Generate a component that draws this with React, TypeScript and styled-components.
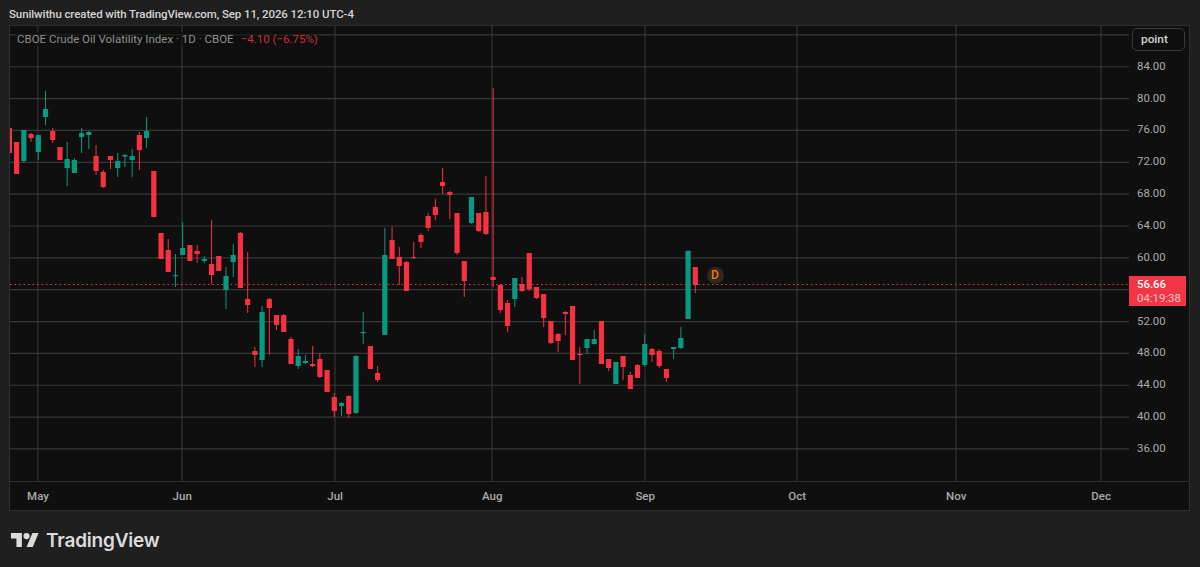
import React from "react";
import styled, { createGlobalStyle } from "styled-components";

const UP = "#089981";
const DOWN = "#f7313f";
const GRID = "#383838";

const GlobalStyle = createGlobalStyle`
    html, body {
        margin: 0;
        padding: 0;
        background: #1f1f1f;
    }
    body {
        font-family: Roboto, "Liberation Sans", sans-serif;
    }
`;

const Page = styled.div`
    width: 1200px;
    height: 567px;
    overflow: hidden;
    display: flex;
    flex-direction: column;
    background: #1f1f1f;
`;
const Caption = styled.div`
    height: 25px;
    padding: 3px 0 0 9px;
    box-sizing: border-box;
    display: flex;
    align-items: center;
    color: #d4d4d4;
    font-size: 11.5px;
    font-weight: 500;
    letter-spacing: -0.1px;
    white-space: nowrap;
`;
const Panel = styled.div`
    width: 1179px;
    height: 484px;
    margin-left: 9px;
    border: 1px solid #2e2e2e;
    background: #0f0f0f;
    display: grid;
    grid-template-columns: 1119px 60px;
    grid-template-rows: 455px 29px;
`;
const Plot = styled.div`
    position: relative;
    overflow: hidden;
`;
const Legend = styled.div`
    position: absolute;
    top: 6px;
    left: 6px;
    padding: 0 1px;
    display: flex;
    gap: 7px;
    background: rgba(15, 15, 15, 0.55);
    color: #8f8f8f;
    font-size: 11.5px;
    line-height: 14px;
    white-space: nowrap;
`;
const Change = styled.span`
    color: #c9303c;
`;
const PriceAxis = styled.div`
    position: relative;
    padding-top: 24.8px;
    display: flex;
    flex-direction: column;
`;
const PriceLabel = styled.div`
    height: 31.85px;
    line-height: 31.85px;
    padding-left: 8px;
    color: #ababab;
    font-size: 11.4px;
`;
const ScaleButton = styled.div`
    position: absolute;
    top: 2px;
    left: 3px;
    width: 53px;
    height: 23px;
    padding-left: 8px;
    box-sizing: border-box;
    border: 1px solid #3a3a3a;
    border-radius: 5px;
    background: #0f0f0f;
    color: #d4d4d4;
    font-size: 11.8px;
    font-weight: 500;
    line-height: 21px;
`;
const PriceTag = styled.div`
    position: absolute;
    top: 250px;
    left: 0;
    width: 57px;
    height: 30px;
    padding-left: 8px;
    box-sizing: border-box;
    background: #f23645;
    color: #ffffff;
    font-size: 11.4px;
    font-weight: 500;
    display: flex;
    flex-direction: column;
    justify-content: center;
`;
const TagLine = styled.span`
    height: 14px;
    line-height: 14px;
`;
const Countdown = styled(TagLine)`
    color: #fbc4c9;
    font-weight: 400;
`;
const TimeAxis = styled.div`
    height: 28px;
    padding-left: 28px;
    border-top: 1px solid #2e2e2e;
    display: flex;
    align-items: center;
    color: #ababab;
    font-size: 11.5px;
`;
const TimeCell = styled.div<{ $width: number }>`
    flex: 0 0 ${(p) => p.$width}px;
    width: ${(p) => p.$width}px;
`;
const TimeLabel = styled.span`
    display: inline-block;
    transform: translateX(-50%);
    font-weight: 500;
`;
const Corner = styled.div`
    border-top: 1px solid #2e2e2e;
`;
const Footer = styled.div`
    flex: 1;
    padding: 2px 0 0 11px;
    display: flex;
    align-items: center;
    gap: 7px;
`;
const Brand = styled.span`
    color: #dcdcdc;
    font-family: Inter, "Liberation Sans", sans-serif;
    font-size: 19px;
    font-weight: 600;
    letter-spacing: -0.2px;
`;
const DividendMark = styled.div`
    position: absolute;
    top: 240.5px;
    left: 696.5px;
    width: 17px;
    height: 17px;
    border-radius: 50%;
    background: #33281d;
    color: #ee7d0e;
    font-size: 12px;
    font-weight: 500;
    line-height: 17px;
    text-align: center;
`;

type Candle = [number, number, number, number, number];

// [direction, wick top, body top, body bottom, wick bottom], in page pixels. 1 = up
const candles: Candle[] = [
    [0, 128, 128, 153, 153], [0, 142, 142, 174, 174], [1, 130, 130, 161, 163], [0, 133, 134, 138, 142],
    [1, 135, 135, 152, 160], [1, 91, 109, 117, 125], [0, 128, 131, 140, 143], [0, 147, 147, 160, 160],
    [1, 142, 159, 168, 186], [1, 158, 160, 173, 173], [1, 128, 133, 137, 153], [1, 131, 132, 135, 149],
    [0, 145, 156, 171, 175], [0, 170, 172, 187, 188], [0, 156, 156, 160, 169], [1, 153, 161, 168, 177],
    [1, 154, 155, 156.5, 167], [1, 149, 156, 160, 177], [0, 132, 135, 150, 170], [1, 117, 131, 138, 148],
    [0, 171, 171, 217, 217], [0, 233, 233, 259, 259], [0, 239, 250, 272, 272], [1, 254, 275, 276.2, 287],
    [1, 222, 248, 255, 255], [0, 245, 245, 261, 261], [0, 245, 251, 254, 263], [1, 256, 259, 261, 263],
    [0, 220, 264, 275, 284], [0, 256, 256, 271, 271], [1, 267, 276, 290, 309], [1, 244, 255, 262, 277],
    [0, 232, 233, 288, 288], [0, 252, 299, 305, 313], [0, 347, 351, 355, 367], [1, 306, 312, 360, 367],
    [0, 298, 299, 308, 355], [0, 315, 315, 325, 330], [0, 314, 315, 332, 332], [0, 337, 339, 364, 364],
    [1, 349, 356, 366, 369], [1, 355, 361, 363, 364], [0, 346, 364, 366, 367], [0, 353, 359, 377, 378],
    [0, 370, 370, 392, 392], [0, 393, 397, 411, 417], [1, 402, 403, 406, 416], [0, 395, 396, 414, 418],
    [1, 355, 356, 413, 414], [1, 312, 332, 333.2, 344], [0, 346, 346, 369, 369], [0, 366, 373, 380, 382],
    [1, 228, 255, 335, 335], [0, 227, 240, 259, 259], [0, 247, 257, 266, 285], [0, 261, 262, 291, 291],
    [0, 242, 257, 258, 259], [0, 233, 235, 242, 248], [0, 213, 216, 228, 231], [0, 199, 207, 215, 220],
    [0, 168, 182, 186, 194], [0, 191, 192, 195, 219], [0, 213, 213, 253, 255], [0, 261, 261, 281, 297],
    [1, 197, 197, 223, 224], [0, 213, 213, 231, 232], [0, 176, 212, 234, 235], [0, 88, 277, 280, 287],
    [0, 285, 285, 310, 313], [0, 300, 303, 326, 332], [1, 278, 278, 299, 307], [0, 277, 284, 291, 292],
    [0, 253, 253, 289, 291], [0, 287, 287, 298, 299], [0, 294, 294, 318, 327], [0, 321, 321, 343, 344],
    [0, 333, 334, 341, 352], [0, 311, 312, 314, 335], [0, 306, 306, 360, 360], [0, 347, 354, 355, 384],
    [1, 339, 339, 348, 354], [1, 330, 339, 344, 344], [0, 321, 321, 364, 364], [0, 359, 359, 368, 371],
    [1, 362, 362, 384, 384], [0, 356, 356, 367, 380], [0, 372, 375, 389, 389], [0, 364, 365, 378, 378],
    [1, 334, 344, 365, 367], [0, 348, 349, 355, 362], [0, 349, 351, 366, 368], [0, 369, 369, 378, 382],
    [1, 347, 347, 349, 359], [1, 327, 338, 348, 349], [1, 250, 251, 319, 319], [0, 267, 267, 285, 293],
];

const gridY = Array.from({ length: 14 }, (_, i) => 34.9 + 31.85 * i);
const gridX = [37.8, 182, 335, 492, 645, 797, 956, 1101];

const prices = ["84.00", "80.00", "76.00", "72.00", "68.00", "64.00", "60.00", "", "52.00", "48.00", "44.00", "40.00", "36.00"];
const months = ["May", "Jun", "Jul", "Aug", "Sep", "Oct", "Nov", "Dec"];

function Chart() {
    return (
        <svg width="1119" height="455" viewBox="10 26 1119 455" style={{ display: "block" }}>
            {gridX.map((x) => (
                <line key={x} x1={x} x2={x} y1={26} y2={481} stroke="#2c2c2c" strokeWidth="1.5" />
            ))}
            {gridY.map((y) => (
                <line key={y} x1={10} x2={1129} y1={y} y2={y} stroke={GRID} strokeWidth="1.2" />
            ))}
            {candles.map(([up, wickTop, top, bottom, wickBottom], i) => {
                const x = 9.4 + 7.22 * i;
                const color = up ? UP : DOWN;
                return (
                    <g key={i} fill={color}>
                        <rect x={x - 0.5} y={wickTop} width="1" height={wickBottom - wickTop} />
                        <rect x={x - 2.6} y={top} width="5.2" height={bottom - top} />
                    </g>
                );
            })}
            <line x1={10} x2={1129} y1={284.5} y2={284.5} stroke="#f23645" strokeWidth="1" strokeDasharray="1.5 3" />
        </svg>
    );
}

function TradingViewMark() {
    return (
        <svg width="28" height="16" viewBox="0 3 36 20" fill="#dcdcdc">
            <path d="M14 22H7V11H0V4h14v18z" />
            <circle cx="20" cy="8" r="4" />
            <path d="M28 22h-8l7.5-18h8L28 22z" />
        </svg>
    );
}

export default function App() {
    return (
        <Page>
            <GlobalStyle />
            <Caption>Sunilwithu created with TradingView.com, Sep 11, 2026 12:10 UTC-4</Caption>
            <Panel>
                <Plot>
                    <Chart />
                    <Legend>
                        <span>CBOE Crude Oil Volatility Index · 1D · CBOE</span>
                        <Change>−4.10 (−6.75%)</Change>
                    </Legend>
                    <DividendMark>D</DividendMark>
                </Plot>
                <PriceAxis>
                    {prices.map((price, i) => (
                        <PriceLabel key={i}>{price}</PriceLabel>
                    ))}
                    <ScaleButton>point</ScaleButton>
                    <PriceTag>
                        <TagLine>56.66</TagLine>
                        <Countdown>04:19:38</Countdown>
                    </PriceTag>
                </PriceAxis>
                <TimeAxis>
                    {months.map((month, i) => (
                        <TimeCell key={month} $width={i < gridX.length - 1 ? gridX[i + 1] - gridX[i] : 0}>
                            <TimeLabel>{month}</TimeLabel>
                        </TimeCell>
                    ))}
                </TimeAxis>
                <Corner />
            </Panel>
            <Footer>
                <TradingViewMark />
                <Brand>TradingView</Brand>
            </Footer>
        </Page>
    );
}
